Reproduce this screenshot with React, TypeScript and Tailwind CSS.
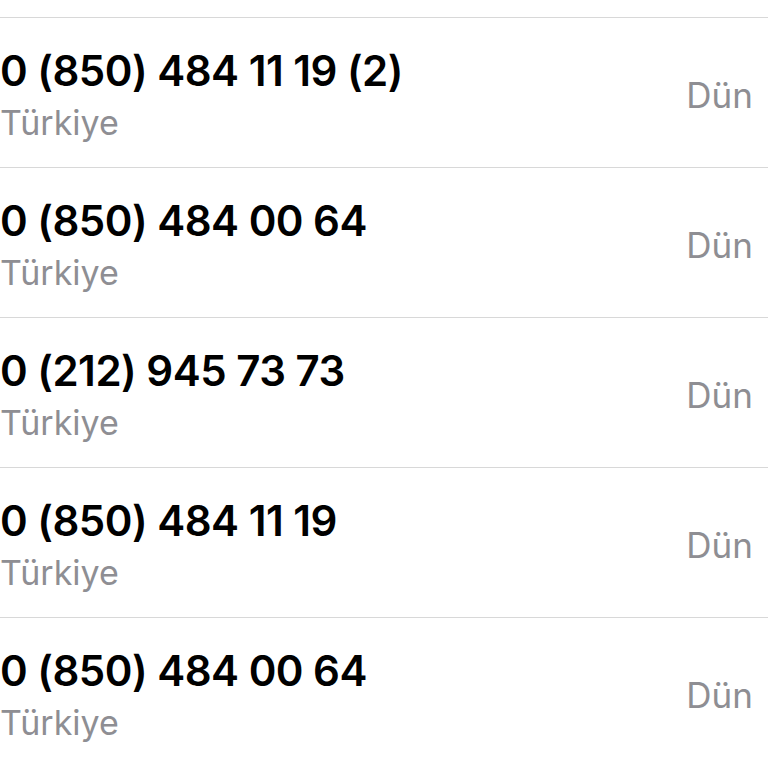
import React from "react";

const rows = [
  "0 (850) 484 11 19 (2)",
  "0 (850) 484 00 64",
  "0 (212) 945 73 73",
  "0 (850) 484 11 19",
  "0 (850) 484 00 64",
];

export default function App() {
  return (
    <div
      className="w-[768px] h-[768px] overflow-hidden bg-white"
      style={{ fontFamily: "Inter, 'Noto Sans', sans-serif" }}
    >
      <div className="h-[17px]" />
      {rows.map((r, i) => (
        <div
          key={i}
          className="h-[150px] border-t border-[#d8d8d8] flex justify-between pr-[15px]"
        >
          <div className="flex flex-col pt-[29px]">
            <div className="text-[42px] leading-[48px] font-semibold text-black tracking-[-0.5px]">
              {r}
            </div>
            <div className="mt-[8px] text-[34px] leading-[40px] text-[#8e8e93]">
              Türkiye
            </div>
          </div>
          <div className="pt-[57px] text-[35px] leading-[40px] text-[#8e8e93]">
            Dün
          </div>
        </div>
      ))}
    </div>
  );
}
